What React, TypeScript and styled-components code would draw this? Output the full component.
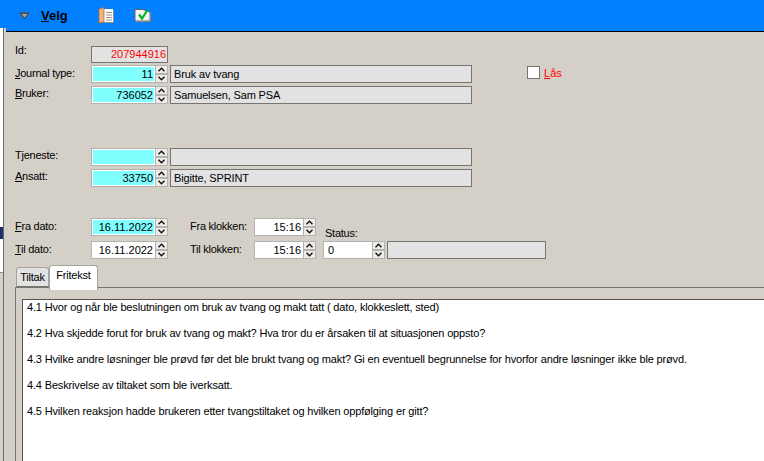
import React from "react";
import styled, { createGlobalStyle } from "styled-components";

const GlobalStyle = createGlobalStyle`
  html, body {
    margin: 0;
    padding: 0;
    height: 100%;
    overflow: hidden;
    background: #d4d0c8;
  }
  #root {
    height: 100%;
  }
`;

const Shell = styled.div`
  display: flex;
  height: 461px;
  font-family: "Liberation Sans", Arial, sans-serif;
  font-size: 11px;
  color: #000;
  background: #d4d0c8;
`;

const Rail = styled.div`
  width: 6px;
  flex: none;
  display: flex;
  flex-direction: column;
`;

const RailTop = styled.div`
  height: 28px;
  background: #0080ff;
`;

const RailBody = styled.div`
  flex: 1;
  width: 3px;
  border-right: 1px solid #6f6d68;
  background: #d4d0c8;
  display: flex;
  flex-direction: column;
`;

const RailPane = styled.div<{ $h: number; $bg: string }>`
  height: ${(p) => p.$h}px;
  background: ${(p) => p.$bg};
  flex: none;
`;

const Main = styled.div`
  flex: 1;
  min-width: 0;
  display: flex;
  flex-direction: column;
`;

const Toolbar = styled.div`
  height: 31px;
  flex: none;
  border-bottom: 1px solid #000;
  background: #0080ff;
  display: flex;
  align-items: center;
  padding-left: 13px;
`;

const MenuLabel = styled.span`
  font-size: 13px;
  font-weight: bold;
  margin-left: 11px;
  width: 57px;
`;

const ToolIcon = styled.svg<{ $left?: number }>`
  flex: none;
  display: block;
  margin-left: ${(p) => p.$left ?? 0}px;
`;

const Form = styled.div`
  padding: 14px 0 0 9px;
  flex: none;
`;

const Row = styled.div<{ $top?: number }>`
  display: flex;
  align-items: flex-start;
  margin-top: ${(p) => p.$top ?? 0}px;
`;

const Label = styled.label<{ $w?: number; $lh?: number }>`
  width: ${(p) => p.$w ?? 76}px;
  flex: none;
  line-height: ${(p) => p.$lh ?? 16}px;
  letter-spacing: -0.25px;
  white-space: nowrap;
`;

const IdValue = styled.div`
  box-sizing: border-box;
  width: 77px;
  height: 17px;
  border: 1px solid #77756f;
  background: #e2e2e2;
  color: #ff0000;
  text-align: right;
  padding-right: 1px;
  line-height: 15px;
`;

const Spin = styled.div<{ $w: number }>`
  box-sizing: border-box;
  width: ${(p) => p.$w}px;
  height: 18px;
  flex: none;
  display: flex;
  border: 1px solid #b4b2ae;
  background: #b4b2ae;
`;

const SpinValue = styled.div<{ $bg?: string; $left?: boolean }>`
  flex: 1;
  min-width: 0;
  box-sizing: border-box;
  border: 1px solid #fff;
  background: ${(p) => p.$bg ?? "#fff"};
  text-align: ${(p) => (p.$left ? "left" : "right")};
  padding: 0 1px 0 3px;
  line-height: 14px;
`;

const SpinButtons = styled.div`
  width: 11px;
  flex: none;
  display: flex;
  flex-direction: column;
  gap: 2px;
  padding: 0 0 0 1px;
`;

const SpinButton = styled.div`
  height: 7px;
  background: #ecebe8;
  display: flex;
  align-items: center;
  justify-content: center;
`;

const InfoField = styled.div<{ $w: number }>`
  box-sizing: border-box;
  width: ${(p) => p.$w}px;
  height: 18px;
  flex: none;
  margin-left: 2px;
  border: 1px solid #77756f;
  background: #e2e2e2;
  padding-left: 3px;
  line-height: 16px;
  letter-spacing: -0.15px;
`;

const LockBox = styled.div`
  box-sizing: border-box;
  width: 13px;
  height: 13px;
  margin: 1px 0 0 55px;
  border: 1px solid #77756f;
  background: #fff;
  flex: none;
`;

const LockLabel = styled.span`
  color: #ff0000;
  margin-left: 4px;
  line-height: 16px;
`;

const Schedule = styled.div`
  display: flex;
  align-items: flex-end;
  margin-top: 31px;
`;

const Stack = styled.div<{ $left?: number }>`
  display: flex;
  flex-direction: column;
  gap: 5px;
  margin-left: ${(p) => p.$left ?? 0}px;
  flex: none;
`;

const StatusColumn = styled.div`
  display: flex;
  flex-direction: column;
  margin-left: 7px;
  flex: none;
`;

const StatusLabel = styled.span`
  padding-left: 2px;
  line-height: 14px;
  margin-bottom: 1px;
  letter-spacing: -0.25px;
`;

const TabStrip = styled.div`
  display: flex;
  align-items: flex-end;
  height: 22px;
  margin: 6px 0 0 10px;
  position: relative;
  z-index: 1;
`;

const Tab = styled.div<{ $active?: boolean }>`
  box-sizing: border-box;
  width: ${(p) => (p.$active ? 49 : 33)}px;
  height: ${(p) => (p.$active ? 25 : 20)}px;
  margin-bottom: ${(p) => (p.$active ? -3 : 0)}px;
  border: 1px solid #a5a39e;
  border-bottom: ${(p) => (p.$active ? "none" : "1px solid #77756f")};
  border-radius: 3px 3px 0 0;
  background: ${(p) => (p.$active ? "#fff" : "#e2e2e2")};
  text-align: center;
  line-height: 19px;
  letter-spacing: -0.2px;
`;

const TabPanel = styled.div`
  flex: 1;
  min-height: 0;
  margin-left: 9px;
  border-top: 1px solid #77756f;
  border-left: 1px solid #77756f;
  padding: 11px 0 0 6px;
  display: flex;
`;

const NoteBox = styled.div`
  flex: 1;
  border-top: 1px solid #55534e;
  border-left: 1px solid #55534e;
  background: #fff;
  padding-left: 4px;
  overflow: hidden;
`;

const Note = styled.p`
  margin: 0 0 12px;
  line-height: 14px;
  letter-spacing: -0.16px;
  white-space: nowrap;
`;

function Chevron({ up }: { up?: boolean }) {
  return (
    <svg width="7" height="5" viewBox="0 0 7 5">
      <path
        d={up ? "M0.5 4.2 L3.5 1.2 L6.5 4.2" : "M0.5 0.8 L3.5 3.8 L6.5 0.8"}
        fill="none"
        stroke="#111"
        strokeWidth="1.4"
      />
    </svg>
  );
}

interface SpinFieldProps {
  width: number;
  value?: string;
  bg?: string;
  left?: boolean;
}

function SpinField({ width, value, bg, left }: SpinFieldProps) {
  return (
    <Spin $w={width}>
      <SpinValue $bg={bg} $left={left}>
        {value}
      </SpinValue>
      <SpinButtons>
        <SpinButton>
          <Chevron up />
        </SpinButton>
        <SpinButton>
          <Chevron />
        </SpinButton>
      </SpinButtons>
    </Spin>
  );
}

const CYAN = "#80ffff";

const NOTES = [
  "4.1 Hvor og når ble beslutningen om bruk av tvang og makt tatt ( dato, klokkeslett, sted)",
  "4.2 Hva skjedde forut for bruk av tvang og makt? Hva tror du er årsaken til at situasjonen oppsto?",
  "4.3 Hvilke andre løsninger ble prøvd før det ble brukt tvang og makt? Gi en eventuell begrunnelse for hvorfor andre løsninger ikke ble prøvd.",
  "4.4 Beskrivelse av tiltaket som ble iverksatt.",
  "4.5 Hvilken reaksjon hadde brukeren etter tvangstiltaket og hvilken oppfølging er gitt?",
];

export default function App() {
  return (
    <>
      <GlobalStyle />
      <Shell>
        <Rail>
          <RailTop />
          <RailBody>
            <RailPane $h={199} $bg="#ffffff" />
            <RailPane $h={12} $bg="#1c2f6e" />
            <RailPane $h={33} $bg="#ffffff" />
            <RailPane $h={1} $bg="#8a8985" />
          </RailBody>
        </Rail>
        <Main>
          <Toolbar>
            <ToolIcon width="11" height="8" viewBox="0 0 11 8">
              <path d="M0 0.5 H11 L5.5 7.5 Z" fill="#4d4b47" />
              <path d="M2.5 2 H8.5 L5.5 5.5 Z" fill="#a9a7a1" />
            </ToolIcon>
            <MenuLabel>
              <u>V</u>elg
            </MenuLabel>
            <ToolIcon width="16" height="17" viewBox="0 0 16 17">
              <rect x="5" y="3" width="11" height="13" fill="#8d8d8d" />
              <rect x="5" y="2" width="10" height="13" fill="#fff" />
              <path d="M8 5.5 H14 M8 8 H14 M8 10.5 H14 M8 13 H14" stroke="#8f8f8f" />
              <path d="M1 2 L6 0.5 V15 L1 16 Z" fill="#f3b27c" stroke="#a86f3f" strokeWidth="0.8" />
            </ToolIcon>
            <ToolIcon width="17" height="15" viewBox="0 0 17 15" $left={20}>
              <path d="M1 1.5 H9 L16 4 V13 H1 Z" fill="#f3f3f3" stroke="#666" />
              <path d="M2 13.5 H16.5 V5" fill="none" stroke="#8a8a8a" />
              <path d="M5 6.5 L8 10.5 L13.5 2" fill="none" stroke="#00b52b" strokeWidth="2.2" />
            </ToolIcon>
          </Toolbar>
          <Form>
            <Row>
              <Label $lh={8}>Id:</Label>
              <IdValue>207944916</IdValue>
            </Row>
            <Row $top={2}>
              <Label>
                <u>J</u>ournal type:
              </Label>
              <SpinField width={77} value="11" bg={CYAN} />
              <InfoField $w={302}>Bruk av tvang</InfoField>
              <LockBox />
              <LockLabel>
                <u>L</u>ås
              </LockLabel>
            </Row>
            <Row $top={3}>
              <Label $lh={14}>
                <u>B</u>ruker:
              </Label>
              <SpinField width={77} value="736052" bg={CYAN} />
              <InfoField $w={302}>Samuelsen, Sam PSA</InfoField>
            </Row>
            <Row $top={44}>
              <Label $lh={14}>Tjeneste:</Label>
              <SpinField width={77} bg={CYAN} />
              <InfoField $w={302} />
            </Row>
            <Row $top={3}>
              <Label $lh={14}>
                <u>A</u>nsatt:
              </Label>
              <SpinField width={77} value="33750" bg={CYAN} />
              <InfoField $w={302}>Bigitte, SPRINT</InfoField>
            </Row>
            <Schedule>
              <Stack>
                <Row>
                  <Label>
                    <u>F</u>ra dato:
                  </Label>
                  <SpinField width={77} value="16.11.2022" bg={CYAN} />
                </Row>
                <Row>
                  <Label>
                    <u>T</u>il dato:
                  </Label>
                  <SpinField width={77} value="16.11.2022" />
                </Row>
              </Stack>
              <Stack $left={22}>
                <Row>
                  <Label $w={64}>Fra klokken:</Label>
                  <SpinField width={62} value="15:16" />
                </Row>
                <Row>
                  <Label $w={64}>Til klokken:</Label>
                  <SpinField width={62} value="15:16" />
                </Row>
              </Stack>
              <StatusColumn>
                <StatusLabel>Status:</StatusLabel>
                <Row>
                  <SpinField width={62} value="0" left />
                  <InfoField $w={159} />
                </Row>
              </StatusColumn>
            </Schedule>
          </Form>
          <TabStrip>
            <Tab>Tiltak</Tab>
            <Tab $active>Fritekst</Tab>
          </TabStrip>
          <TabPanel>
            <NoteBox>
              {NOTES.map((note) => (
                <Note key={note}>{note}</Note>
              ))}
            </NoteBox>
          </TabPanel>
        </Main>
      </Shell>
    </>
  );
}
